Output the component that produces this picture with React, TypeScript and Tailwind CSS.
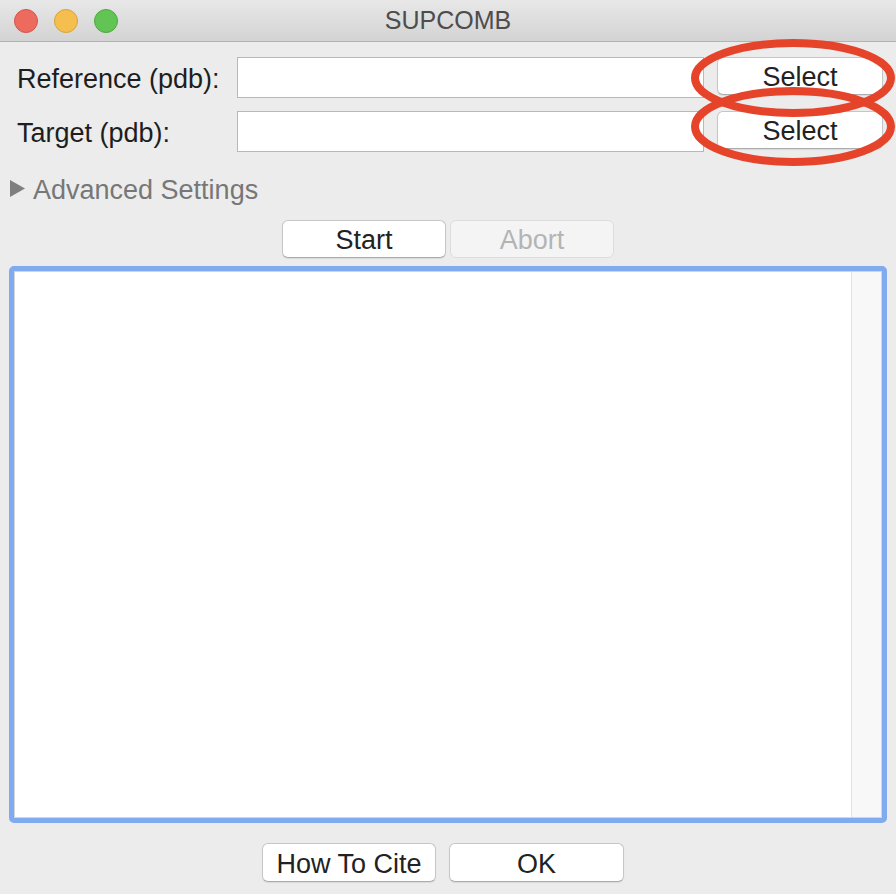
import React from "react";

const font = { fontFamily: '"Liberation Sans", Arial, Helvetica, sans-serif' };

function MacButton({ children, disabled, className = "" }: { children: React.ReactNode; disabled?: boolean; className?: string }) {
  return (
    <div
      className={
        "flex items-center justify-center rounded-[6px] border text-[27px] leading-none pt-[3px] " +
        (disabled
          ? "bg-[#f4f4f4] border-[#dddddd] text-[#b4b4b4]"
          : "bg-white border-[#c6c6c6] border-b-[#acacac] text-[#222222] shadow-[0_1px_1px_rgba(0,0,0,0.08)]") +
        " " +
        className
      }
    >
      {children}
    </div>
  );
}

export default function App() {
  return (
    <div className="relative w-[896px] h-[894px] overflow-hidden bg-[#ececec] flex flex-col" style={font}>
      {/* Title bar */}
      <div className="relative h-[42px] shrink-0 bg-gradient-to-b from-[#e9e8e9] to-[#d3d3d3] border-b border-[#b3b3b3] flex items-center">
        <div className="flex gap-[16px] pl-[14px]">
          <div className="w-[24px] h-[24px] rounded-full bg-[#ed6a5e] border border-[#d5554a]" />
          <div className="w-[24px] h-[24px] rounded-full bg-[#f5bf4f] border border-[#d9a23b]" />
          <div className="w-[24px] h-[24px] rounded-full bg-[#61c454] border border-[#4fa83f]" />
        </div>
        <div className="absolute inset-0 flex items-center justify-center text-[25px] text-[#4d4d4d] pt-[1px]">SUPCOMB</div>
      </div>

      {/* Row 1 */}
      <div className="flex items-center mt-[15px] pl-[17px]">
        <div className="w-[220px] text-[27px] text-[#1e1e1e] leading-none pt-[3px]">Reference (pdb):</div>
        <div className="w-[467px] h-[41px] bg-white border border-[#b8b8b8]" />
        <MacButton className="ml-[13px] w-[166px] h-[38px] -mt-[3px]">Select</MacButton>
      </div>

      {/* Row 2 */}
      <div className="flex items-center mt-[13px] pl-[17px]">
        <div className="w-[220px] text-[27px] text-[#1e1e1e] leading-none pt-[3px]">Target (pdb):</div>
        <div className="w-[467px] h-[41px] bg-white border border-[#b8b8b8]" />
        <MacButton className="ml-[13px] w-[166px] h-[38px] -mt-[3px]">Select</MacButton>
      </div>

      {/* Advanced settings */}
      <div className="flex items-center h-[28px] mt-[23px] pl-[10px]">
        <svg width="16" height="18" viewBox="0 0 16 18" className="shrink-0 mt-[-1px]">
          <polygon points="0,0 15,8.5 0,17" fill="#7f7f7f" />
        </svg>
        <span className="ml-[7px] text-[27px] text-[#777777] leading-none pt-[2px]">Advanced Settings</span>
      </div>

      {/* Start/Abort */}
      <div className="flex justify-center gap-[4px] mt-[17px]">
        <MacButton className="w-[164px] h-[38px]">Start</MacButton>
        <MacButton disabled className="w-[164px] h-[38px]">Abort</MacButton>
      </div>

      {/* Text area */}
      <div className="mt-[8px] ml-[9px] w-[878px] h-[557px] rounded-[5px] border-[5px] border-[#80abf0]">
        <div className="w-full h-full border border-[#d6d6d6] flex">
          <div className="flex-1 bg-white" />
          <div className="w-[30px] bg-[#f8f8f8] border-l border-[#e2e2e2]" />
        </div>
      </div>

      {/* Bottom buttons */}
      <div className="flex justify-center gap-[13px] mt-[20px] pr-[10px]">
        <MacButton className="w-[174px] h-[39px]">How To Cite</MacButton>
        <MacButton className="w-[175px] h-[39px]">OK</MacButton>
      </div>

      {/* Red annotation ellipses */}
      <svg className="absolute left-0 top-0 pointer-events-none" width="896" height="894" viewBox="0 0 896 894">
        <ellipse cx="793" cy="78" rx="98" ry="35" fill="none" stroke="#e6432b" strokeWidth="8" />
        <ellipse cx="793" cy="126.5" rx="98" ry="35.5" fill="none" stroke="#e6432b" strokeWidth="8" />
      </svg>
    </div>
  );
}
